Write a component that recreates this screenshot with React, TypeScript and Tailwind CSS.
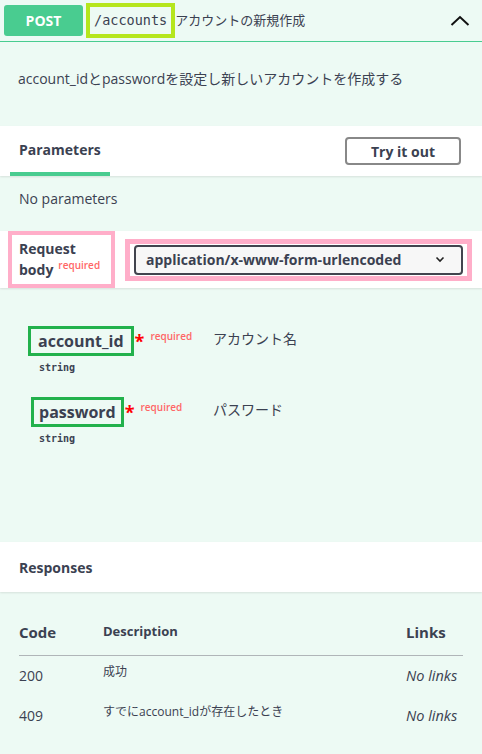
const sans = "font-['Open_Sans','Noto_Sans_CJK_JP',sans-serif]";
const mono = "font-['DejaVu_Sans_Mono','Liberation_Mono',monospace]";

function Param({
  name,
  boxClass,
  desc,
}: {
  name: string;
  boxClass: string;
  desc: string;
}) {
  return (
    <div className="flex">
      <div className="w-[185px] shrink-0">
        <div className="flex items-start">
          <div
            className={`flex h-[30px] items-center border-[3px] border-[#22b14c] text-[16px] font-bold ${boxClass}`}
          >
            {name}
          </div>
          <span className="ml-[1px] mt-[5px] text-[18px] font-bold leading-[20px] text-[#ff0000]">*</span>
          <span className="ml-[6px] mt-[3px] text-[10px] font-semibold leading-[14px] text-[#ff6666]">
            required
          </span>
        </div>
        <div className={`ml-[11px] mt-[5px] text-[10px] font-bold leading-[14px] ${mono}`}>string</div>
      </div>
      <div className="pt-[3px] text-[14px] leading-[20px]">{desc}</div>
    </div>
  );
}

export default function App() {
  return (
    <div className={`min-h-[754px] w-full bg-[#edfaf4] text-[#3b4151] ${sans}`}>
      {/* summary header */}
      <div className="flex h-[42px] items-center border-b border-[#49cc90] pl-1 pr-3">
        <div className="flex h-[31px] w-[79px] items-center justify-center rounded-[3px] bg-[#49cc90] text-[14px] font-bold text-white">
          POST
        </div>
        <div
          className={`ml-[3px] flex h-[35px] items-center border-4 border-[#b5e61d] px-[4px] text-[13.5px] ${mono}`}
        >
          /accounts
        </div>
        <div className="text-[13px]">アカウントの新規作成</div>
        <svg className="ml-auto" width="20" height="12" viewBox="0 0 20 12">
          <polyline points="1.5,10 10,2 18.5,10" fill="none" stroke="#111" strokeWidth="2" />
        </svg>
      </div>

      {/* description */}
      <div className="h-[84px] px-[18px] pt-[27px] text-[14px] leading-[20px]">
        account_idとpasswordを設定し新しいアカウントを作成する
      </div>

      {/* parameters tab */}
      <div className="flex h-[50px] items-center justify-between bg-white pl-[10px] pr-[21px] shadow-[0_1px_2px_rgba(0,0,0,0.1)]">
        <div className="flex h-[50px] items-center border-b-4 border-[#49cc90] px-[9px] pt-[1px] text-[14px] font-bold">
          Parameters
        </div>
        <button className="h-[28px] w-[116px] rounded-[4px] border-2 border-[#888] text-[14px] font-bold">
          Try it out
        </button>
      </div>

      <div className="h-[55px] px-[19px] pt-[13px] text-[14px] leading-[20px]">No parameters</div>

      {/* request body */}
      <div className="flex h-[57px] items-center bg-white pl-2 shadow-[0_1px_2px_rgba(0,0,0,0.1)]">
        <div className="flex h-[57px] w-[107px] flex-col justify-center border-4 border-[#ffaec9] pl-[7px] text-[14px] font-bold leading-[21px]">
          <span>Request</span>
          <span>
            body
            <span className="relative -top-[6px] ml-[5px] text-[10px] font-semibold text-[#ff6666]">required</span>
          </span>
        </div>
        <div className="ml-[10px] border-[5px] border-[#ffaec9] px-1 py-[1px]">
          <div className="flex h-[30px] w-[329px] items-center rounded-[4px] border-2 border-[#41444e] bg-[#f7f7f7] pl-[10px] pr-[16px] text-[14px] font-bold">
            application/x-www-form-urlencoded
            <svg className="ml-auto" width="10" height="7" viewBox="0 0 10 7">
              <polyline points="1.5,1.5 5,5 8.5,1.5" fill="none" stroke="#222" strokeWidth="1.6" />
            </svg>
          </div>
        </div>
      </div>

      {/* body params */}
      <div className="flex h-[254px] flex-col gap-[22px] px-[28px] pt-[38px]">
        <Param name="account_id" boxClass="px-[7px]" desc="アカウント名" />
        <Param name="password" boxClass="ml-[3px] px-[5px]" desc="パスワード" />
      </div>

      {/* responses */}
      <div className="flex h-[50px] items-center bg-white px-[19px] text-[14px] font-bold shadow-[0_1px_2px_rgba(0,0,0,0.1)]">
        Responses
      </div>

      <div className="px-[19px] pt-[17px]">
        <div className="flex h-[47px] items-center border-b border-[#b0b5b8] font-bold">
          <div className="w-[84px] text-[15px]">Code</div>
          <div className="w-[303px] text-[13px]">Description</div>
          <div className="text-[15px]">Links</div>
        </div>
        {[
          ["200", "成功"],
          ["409", "すでにaccount_idが存在したとき"],
        ].map(([code, desc]) => (
          <div key={code} className="flex h-[40px] items-start">
            <div className="w-[84px] pt-[10px] text-[14px] leading-[20px]">{code}</div>
            <div className="w-[303px] pt-[8px] text-[12px] leading-[16px]">{desc}</div>
            <div className="pt-[10px] text-[14.5px] italic leading-[20px]">No links</div>
          </div>
        ))}
      </div>
    </div>
  );
}
